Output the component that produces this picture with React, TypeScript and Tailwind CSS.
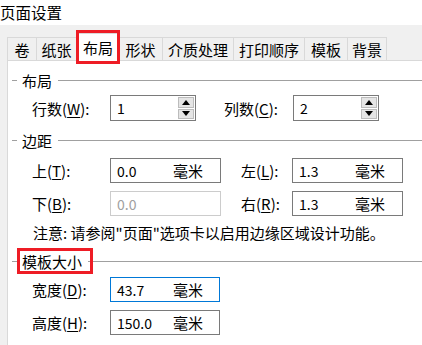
import React from "react";

type LabelProps = { text: string; accel: string; width: string };

function Label({ text, accel, width }: LabelProps) {
  return (
    <div className={`${width} shrink-0 text-[15px] leading-none text-black`}>
      {text}(<span className="underline underline-offset-2">{accel}</span>):
    </div>
  );
}

function Legend({ title, boxed = false }: { title: string; boxed?: boolean }) {
  return (
    <div className="flex h-[20px] items-center">
      <div className="ml-[4px] h-px w-[5px] bg-[#a0a0a0]" />
      <div className="relative ml-[5px] mr-[6px] text-[15px] leading-none text-black">
        {title}
        {boxed && (
          <div className="pointer-events-none absolute left-[-5px] top-[-6px] h-[26px] w-[76px] border-[3px] border-[#ee1c25]" />
        )}
      </div>
      <div className="h-px flex-1 bg-[#a0a0a0]" />
    </div>
  );
}

function UnitBox({
  value,
  width = "w-[111px]",
  disabled = false,
  focused = false,
}: {
  value: string;
  width?: string;
  disabled?: boolean;
  focused?: boolean;
}) {
  const border = disabled ? "border-[#cccccc]" : focused ? "border-[#0078d7]" : "border-[#7a7a7a]";
  return (
    <div className={`flex h-[25px] ${width} shrink-0 items-center border ${border} bg-white pl-[6px] text-[14px] leading-none`}>
      <span className={`w-[56px] ${disabled ? "text-[#a0a0a0]" : "text-black"}`}>{value}</span>
      {!disabled && <span className="text-[15px] text-black">毫米</span>}
    </div>
  );
}

function Spin({ value }: { value: string }) {
  return (
    <div className="flex h-[26px] w-[86px] shrink-0 border border-[#7a7a7a] bg-white">
      <div className="flex flex-1 items-center pl-[6px] text-[14px] leading-none text-black">{value}</div>
      <div className="flex w-[18px] flex-col gap-px bg-white p-px">
        <div className="flex flex-1 items-center justify-center border border-[#bcbcbc] bg-[#e5e5e5]">
          <svg width="8" height="5" viewBox="0 0 8 5">
            <polygon points="0,5 8,5 4,0" fill="#000" />
          </svg>
        </div>
        <div className="flex flex-1 items-center justify-center border border-[#bcbcbc] bg-[#e5e5e5]">
          <svg width="8" height="5" viewBox="0 0 8 5">
            <polygon points="0,0 8,0 4,5" fill="#000" />
          </svg>
        </div>
      </div>
    </div>
  );
}

const tabs: { name: string; w: string }[] = [
  { name: "卷", w: "w-[30px]" },
  { name: "纸张", w: "w-[40px]" },
  { name: "布局", w: "w-[42px]" },
  { name: "形状", w: "w-[44px]" },
  { name: "介质处理", w: "w-[71px]" },
  { name: "打印顺序", w: "w-[71px]" },
  { name: "模板", w: "w-[43px]" },
  { name: "背景", w: "w-[39px]" },
];

export default function App() {
  return (
    <div className="flex h-[345px] w-[422px] flex-col overflow-hidden bg-white font-['Noto_Sans_CJK_SC','Microsoft_YaHei',sans-serif] text-black">
      <div className="flex h-[25px] shrink-0 items-center bg-white text-[15.5px] leading-none">页面设置</div>

      <div className="flex flex-1 flex-col bg-[#f0f0f0] pl-[7px] pt-[12px]">
        {/* tab strip */}
        <div className="relative z-10 flex h-[23px] items-end">
          {tabs.map((t) =>
            t.name === "布局" ? (
              <div
                key={t.name}
                className={`relative ${t.w} mb-[-1px] flex h-[28px] shrink-0 items-center justify-center border border-b-0 border-[#d9d9d9] bg-white text-[15px] leading-none`}
              >
                {t.name}
                <div className="pointer-events-none absolute left-[-2px] top-[-4px] h-[34px] w-[44px] border-[3px] border-[#ee1c25]" />
              </div>
            ) : (
              <div
                key={t.name}
                className={`${t.w} flex h-[23px] shrink-0 items-center justify-center border border-b-0 border-l-0 border-[#d9d9d9] bg-[#f0f0f0] text-[15px] leading-none first:border-l`}
              >
                {t.name}
              </div>
            )
          )}
        </div>

        {/* panel */}
        <div className="flex flex-1 flex-col border-l border-t border-[#d9d9d9] bg-white">
          <div className="mt-[9px]">
            <Legend title="布局" />
          </div>
          <div className="mt-[5px] flex items-center pl-[24px]">
            <Label text="行数" accel="W" width="w-[78px]" />
            <Spin value="1" />
            <div className="w-[28px] shrink-0" />
            <Label text="列数" accel="C" width="w-[69px]" />
            <Spin value="2" />
          </div>

          <div className="mt-[9px]">
            <Legend title="边距" />
          </div>
          <div className="mt-[8px] flex items-center pl-[24px]">
            <Label text="上" accel="T" width="w-[78px]" />
            <UnitBox value="0.0" />
            <div className="w-[20px] shrink-0" />
            <Label text="左" accel="L" width="w-[51px]" />
            <UnitBox value="1.3" />
          </div>
          <div className="mt-[8px] flex items-center pl-[24px]">
            <Label text="下" accel="B" width="w-[78px]" />
            <UnitBox value="0.0" disabled />
            <div className="w-[20px] shrink-0" />
            <Label text="右" accel="R" width="w-[51px]" />
            <UnitBox value="1.3" />
          </div>
          <div className="mt-[6px] flex h-[20px] items-center pl-[25px] text-[15px] leading-none">
            注意: 请参阅"页面"选项卡以启用边缘区域设计功能。
          </div>

          <div className="mt-[9px]">
            <Legend title="模板大小" boxed />
          </div>
          <div className="mt-[6px] flex items-center pl-[24px]">
            <Label text="宽度" accel="D" width="w-[78px]" />
            <UnitBox value="43.7" width="w-[110px]" focused />
          </div>
          <div className="mt-[8px] flex items-center pl-[24px]">
            <Label text="高度" accel="H" width="w-[78px]" />
            <UnitBox value="150.0" width="w-[110px]" />
          </div>
        </div>
      </div>
    </div>
  );
}
